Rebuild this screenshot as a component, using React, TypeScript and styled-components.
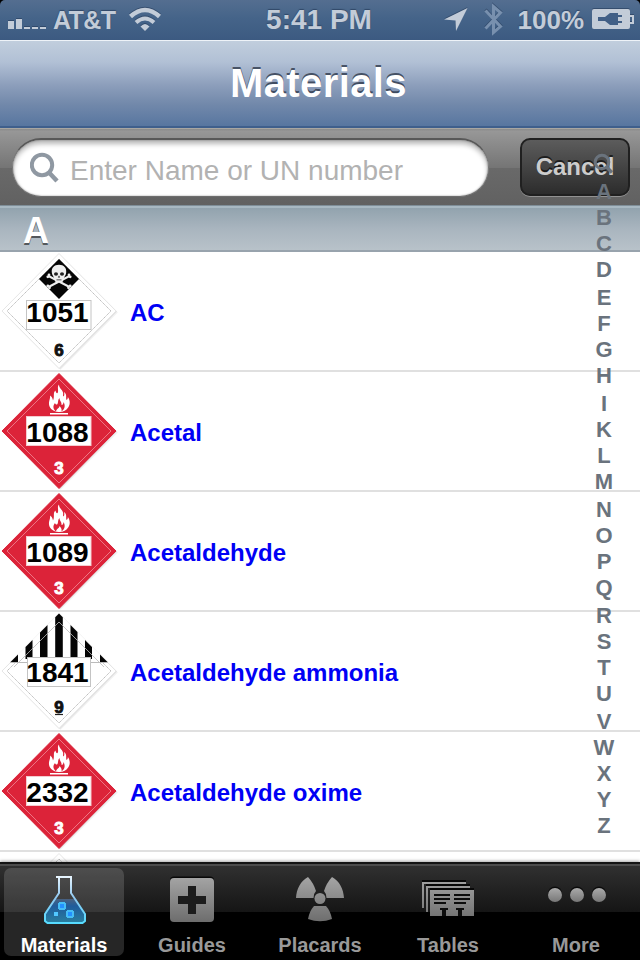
import React from 'react';
import styled, { createGlobalStyle } from 'styled-components';

const GlobalStyle = createGlobalStyle`
  * { box-sizing: border-box; }
  body { margin: 0; background: #000; }
`;

const Screen = styled.div`
  position: relative;
  display: flex;
  flex-direction: column;
  width: 640px;
  height: 960px;
  overflow: hidden;
  background: #fff;
  font-family: "Liberation Sans", Arial, sans-serif;
  font-weight: 700;
  white-space: nowrap;
`;

/* ---------- status bar ---------- */

const StatusShell = styled.div`
  flex: none;
  height: 40px;
  background: #000;
`;

const StatusBar = styled.header`
  display: grid;
  grid-template-columns: 1fr auto 1fr;
  height: 40px;
  border-radius: 5px 5px 0 0;
  background: linear-gradient(#546e90, #456489 45%, #3c5a81);
  color: #c3ccd8;
  text-shadow: 0 -1px 1px rgba(30, 50, 80, 0.6);
`;

const StatusGroup = styled.div<{ $end?: boolean }>`
  display: flex;
  justify-content: ${(p) => (p.$end ? 'flex-end' : 'flex-start')};
  svg { flex: none; filter: drop-shadow(0 -1px 0 rgba(30, 50, 80, 0.5)); }
`;

const StatusText = styled.span<{ $size: number; $spacing?: number }>`
  font-size: ${(p) => p.$size}px;
  letter-spacing: ${(p) => p.$spacing ?? 0}px;
  line-height: 40px;
`;

const Clock = styled(StatusText)`
  padding-right: 2px;
`;

/* ---------- navigation bar ---------- */

const NavBar = styled.div`
  flex: none;
  height: 88px;
  border-top: 1px solid #eef3f8;
  border-bottom: 2px solid #3f5f8c;
  background: linear-gradient(#c1cedd, #b1c0d5 25%, #8c9ebb 52%, #7188aa 75%, #5876a0);
  text-align: center;
`;

const Title = styled.h1`
  margin: 0;
  padding-right: 3px;
  font-size: 40px;
  line-height: 84px;
  letter-spacing: 0.4px;
  color: #fff;
  text-shadow: 0 -2px 0 rgba(40, 50, 68, 0.75);
`;

/* ---------- search ---------- */

const SearchBar = styled.div`
  flex: none;
  display: flex;
  justify-content: space-between;
  height: 78px;
  padding: 9px 10px 0 12px;
  border-top: 1px solid #a8a6a2;
  background: linear-gradient(#8b8b8b, #979797 3%, #757575 50%, #696969 51%, #616161);
`;

const SearchField = styled.label`
  display: flex;
  align-items: center;
  gap: 10px;
  width: 477px;
  height: 59px;
  padding: 0 0 0 17px;
  border-radius: 29px;
  border: 1px solid #777;
  border-top: 2px solid #585858;
  border-bottom-color: #6d6d6d;
  background: #fff;
  box-shadow: inset 0 4px 5px rgba(0, 0, 0, 0.28), inset 0 0 2px rgba(0, 0, 0, 0.4);
`;

const Placeholder = styled.span`
  padding-top: 5px;
  font-size: 28px;
  font-weight: 400;
  color: #b2b2b2;
`;

const CancelButton = styled.button`
  width: 110px;
  height: 58px;
  padding: 0 0 1px;
  border: 2px solid #202020;
  border-radius: 10px;
  background: linear-gradient(#5c5c5c, #2c2c2c);
  box-shadow: 0 1px 0 rgba(255, 255, 255, 0.3);
  font: 700 24px "Liberation Sans", Arial, sans-serif;
  letter-spacing: 0;
  color: #ccc;
  text-shadow: 0 -2px 0 rgba(0, 0, 0, 0.6);
`;

/* ---------- list ---------- */

const SectionHeader = styled.h2`
  flex: none;
  height: 46px;
  margin: 0;
  padding-left: 23px;
  border-top: 2px solid #a8b8c2;
  border-bottom: 2px solid #98a3ad;
  background: linear-gradient(#92a3ae, #a9b5bf 50%, #b8c2c9);
  box-shadow: 0 -1px 0 #7f8e98;
  font-size: 36px;
  line-height: 45px;
  color: #fff;
  text-shadow: 0 2px 0 rgba(0, 0, 0, 0.55);
`;

const List = styled.main`
  flex: 1;
  min-height: 0;
  overflow: hidden;
`;

const Row = styled.div`
  display: flex;
  align-items: center;
  gap: 10px;
  height: 120px;
  border-bottom: 2px solid #e0e0e0;
`;

const PlacardBox = styled.div`
  position: relative;
  width: 120px;
  height: 118px;
  svg { display: block; }
`;

const UnNumber = styled.span`
  position: absolute;
  left: 0;
  top: 45px;
  width: 115px;
  text-align: center;
  font-size: 28px;
  line-height: 32px;
  color: #000;
`;

const MaterialName = styled.span`
  padding-top: 4px;
  font-size: 24px;
  color: #0000f5;
`;

const IndexStrip = styled.nav`
  position: absolute;
  top: 151px;
  left: 588px;
  width: 32px;
  display: flex;
  flex-direction: column;
  align-items: center;
  color: #6a737d;
`;

const IndexGlass = styled.span`
  height: 28px;
  svg { display: block; }
`;

const IndexLetter = styled.span<{ $tall: boolean }>`
  height: ${(p) => (p.$tall ? 28 : 26)}px;
  font-size: 22px;
  line-height: 26px;
`;

/* ---------- tab bar ---------- */

const TabBar = styled.footer`
  position: relative;
  flex: none;
  display: grid;
  grid-template-columns: repeat(5, 128px);
  height: 98px;
  padding-top: 2px;
  border-top: 2px solid #141414;
  box-shadow: 0 -1px 3px rgba(0, 0, 0, 0.35);
  background: linear-gradient(#4c4c4c 0 2px, #303030 2px, #151515 48px, #000 48px);
`;

const Tab = styled.div<{ $active?: boolean }>`
  display: flex;
  flex-direction: column;
  align-items: center;
  width: 120px;
  height: 88px;
  margin: 2px 4px;
  padding-top: 2px;
  border-radius: 7px;
  background: ${(p) => (p.$active ? 'rgba(255,255,255,0.15)' : 'transparent')};
  color: ${(p) => (p.$active ? '#fff' : '#999')};
  font-size: 20px;
  line-height: 22px;
  svg { flex: none; display: block; margin-bottom: 4px; }
`;

/* ---------- drawings ---------- */

const SignalIcon = () => (
  <svg width="53" height="40" fill="#c3ccd8">
    <path d="M8 21h6v8H8zM16 19h6v10h-6zM24 27h6v2h-6zM32 27h6v2h-6zM40 27h6v2h-6z" />
  </svg>
);

const WifiIcon = () => (
  <svg width="48" height="40" viewBox="-5 0 48 40" fill="none" stroke="#c3ccd8">
    <path d="M10.500 16.500Q25 3.500 39.500 16.500" strokeWidth="4.500" />
    <path d="M16 22.500Q25 14.500 34 22.500" strokeWidth="4" />
    <path d="M25 31l-4.500-4.500Q25 21.500 29.500 26.500Z" fill="#c3ccd8" stroke="none" />
  </svg>
);

const LocationIcon = () => (
  <svg width="40" height="40" viewBox="5 0 40 40">
    <path d="M28.500 8L5 19.500L16.500 20.500L17 31Z" fill="#c3ccd8" />
  </svg>
);

const BluetoothIcon = () => (
  <svg width="34" height="40" viewBox="4 0 34 40" fill="none" stroke="#7890ae" strokeWidth="3">
    <path d="M5.500 10.500L20.500 26.500L13.500 32.500V6.500L20.500 12.500L5.500 28.500" />
  </svg>
);

const BatteryIcon = () => (
  <svg width="56" height="40" viewBox="0 0 56 40">
    <rect x="8" y="9" width="38" height="20" rx="2" fill="#c3ccd8" />
    <path d="M46 16h3v7h-3" fill="none" stroke="#c3ccd8" strokeWidth="2" />
    <path
      d="M14 17h7l5-4h8v2h4v2h-4v4h4v2h-4v2h-8l-5-4h-7z"
      fill="#415f86"
    />
  </svg>
);

const GlassIcon = () => (
  <svg width="30" height="32" viewBox="0 0 30 32" fill="none" stroke="#8f98a2">
    <circle cx="12" cy="13" r="10.200" strokeWidth="4" />
    <path d="M19 20.500L27 29" strokeWidth="4.500" />
  </svg>
);

const FlameArt = () => (
  <g fill="#fff" transform="translate(0 2.500)">
    <path d="M59 37.500C52 37 48.500 33 49 28C49.200 25.500 50.500 23.500 50 21C52.500 22.500 52.500 24.500 53 26C55 22 52.500 18.500 55.500 16C56 19 57.500 19.500 58 17.500C58.500 14.500 57 12.500 59 10C59 14 62 14.500 63 18C63.500 20 62.500 21 63.500 22C64.500 21 64.500 19.500 64 17.500C67.500 20 65.500 23 66.500 25.500C67.500 25 68 23.500 67.800 22.500C70.500 26 70 30 68.500 32.500C66.500 36 63.500 37.500 59 37.500Z" />
    <path d="M56 37C52.500 34 53 31 55 28.500C55.500 30 56.500 30.500 57.500 29.500C58.500 27.500 57.500 25.500 59.500 23.500C59.500 26.500 62 27.500 61.500 30.500C63 30.500 63.500 29 63.500 27.500C65.500 31 65 34.500 61.500 37C62 34.500 61 33 59.500 31.500C59.500 34 56.500 34 56 37Z" fill="#dc2339" />
    <path d="M58 37C57.500 35.500 58.500 34.500 59.500 33C60.500 35 60.800 36 60 37Z" />
    <rect x="50" y="38.500" width="18" height="1.500" />
  </g>
);

const SkullArt = () => (
  <g>
    <path d="M59 7L79 27L59 47L39 27Z" fill="#050505" />
    <path d="M48.500 24L69.500 35M69.500 24L48.500 35" stroke="#eee" strokeWidth="2" />
    <g fill="#eee">
      <circle cx="47.800" cy="24.800" r="1.400" /><circle cx="49" cy="23" r="1.400" />
      <circle cx="70.200" cy="24.800" r="1.400" /><circle cx="69" cy="23" r="1.400" />
      <circle cx="47.800" cy="34" r="1.400" /><circle cx="49.500" cy="35.800" r="1.400" />
      <circle cx="70.200" cy="34" r="1.400" /><circle cx="68.500" cy="35.800" r="1.400" />
      <path d="M59 12.800C64 12.800 66.700 16 66.200 20.500C66 23 64.500 24 64 26L62.500 30H55.500L54 26C53.500 24 52 23 51.800 20.500C51.300 16 54 12.800 59 12.800Z" />
    </g>
    <ellipse cx="56" cy="22" rx="2" ry="1.700" fill="#222" />
    <ellipse cx="62" cy="22" rx="2" ry="1.700" fill="#222" />
    <path d="M59 23.500l1.200 2h-2.400zM56.500 27.500h5v.8h-5z" fill="#222" />
  </g>
);

const StripeArt = () => (
  <g>
    <path d="M59 1.500L108 50.500H10Z" fill="#fff" />
    <path
      fill="#050505"
      d="M59 1.500L62.800 5.300V46H55.200V5.300ZM47.500 13V46H40V20.500ZM32.500 28V47H25.500V35ZM18 42.500V50.500H10ZM70.500 13V46H77.500V20ZM85 28V47H92V35ZM100 42.500V50.500H108Z"
    />
    <path d="M10 50.500H28M90 50.500H108" stroke="#bbb" />
    <path d="M59 10L14 55M59 10L104 55" stroke="#bbb" strokeWidth="0.800" fill="none" />
  </g>
);

type Kind = 'poison' | 'flammable' | 'misc';

const hazard: Record<Kind, { digit: string; art: React.ReactNode; digitY: number }> = {
  poison: { digit: '6', art: <SkullArt />, digitY: 104 },
  flammable: { digit: '3', art: <FlameArt />, digitY: 101.5 },
  misc: { digit: '9', art: <StripeArt />, digitY: 100.5 },
};

const PlacardFrame = ({ red }: { red?: boolean }) => (
  <>
    <path d="M60.500 3.500L118 60.500L60.500 118L3 60.500Z" fill="#000" opacity="0.05" />
    <path d="M60 2.500L117 59.500L60 117L3 59.500Z" fill="#000" opacity="0.08" />
    <path
      d="M59 1.500L116 59L59 116.500L2 59Z"
      fill={red ? '#dc2339' : '#fff'}
      stroke={red ? '#dc2339' : '#e6e6e6'}
      strokeWidth="1"
    />
    <path
      d="M59 7L111 59L59 111L7 59Z"
      fill="none"
      stroke={red ? '#ee7f8b' : '#b8b8b8'}
      strokeWidth="0.900"
      strokeDasharray={red ? undefined : '1.500 0.500'}
    />
  </>
);

const PlacardArt = ({ kind }: { kind: Kind }) => {
  const red = kind === 'flammable';
  const { digit, art, digitY } = hazard[kind];
  return (
    <svg width="120" height="118" viewBox="0 0 120 118">
      <PlacardFrame red={red} />
      {art}
      <rect
        x={kind === 'misc' ? 27.5 : 26.5}
        y={kind === 'poison' ? 48.5 : kind === 'misc' ? 45.5 : 44.500}
        width={kind === 'misc' ? 63 : 64.500}
        height="29"
        fill="#fff"
        stroke={red ? '#f4ccd0' : '#c4c4c4'}
      />
      <text
        x="59"
        y={digitY}
        textAnchor="middle"
        fontSize="17"
        fontWeight="700"
        fontFamily="'Liberation Sans', Arial, sans-serif"
        fill={red ? '#fff' : '#111'}
        stroke={red ? '#fff' : '#111'}
        strokeWidth="0.900"
      >
        {digit}
      </text>
      {kind === 'misc' && <path d="M55 102.500H63" stroke="#222" strokeWidth="1.200" />}
    </svg>
  );
};

const GreyFill = ({ id }: { id: string }) => (
  <defs>
    <linearGradient id={id} gradientUnits="userSpaceOnUse" x1="0" y1="6" x2="0" y2="53">
      <stop offset="0" stopColor="#a6a6a6" />
      <stop offset="1" stopColor="#6c6c6c" />
    </linearGradient>
  </defs>
);

const FlaskIcon = () => (
  <svg width="60" height="60" viewBox="0 0 60 60">
    <defs>
      <linearGradient id="glass" gradientUnits="userSpaceOnUse" x1="0" y1="6" x2="0" y2="54">
        <stop offset="0" stopColor="#eaf6ff" />
        <stop offset="0.450" stopColor="#8fc8f0" />
        <stop offset="1" stopColor="#55dcff" />
      </linearGradient>
      <linearGradient id="liquid" x1="0" y1="0" x2="0" y2="1">
        <stop offset="0" stopColor="#4a607e" />
        <stop offset="0.300" stopColor="#1f5c9c" />
        <stop offset="1" stopColor="#2a7f9e" />
      </linearGradient>
    </defs>
    <path d="M20 29H42L50 43V53H12V43Z" fill="url(#liquid)" />
    <path d="M22 7H38M25 8V23L21 29L17 35L11 44V51L13.500 53H48.500L51 51V44L45 35L41 29L37 23V8" fill="none" stroke="url(#glass)" strokeWidth="2" />
    <path d="M25 32h6v1h1v6h-1v1h-6v-1h-1v-6h1zM33 40h6v1h1v6h-1v1h-6v-1h-1v-6h1z" fill="#45bdf5" />
    <path d="M26 34h4v4h-4zM34 42h4v4h-4z" fill="#2490ff" />
    <path d="M20 42h4v4h-4z" fill="#52c8ff" />
  </svg>
);

const GuidesIcon = () => (
  <svg width="60" height="60" viewBox="0 0 60 60">
    <GreyFill id="g1" />
    <rect x="8" y="6.500" width="44" height="20" rx="4" fill="#080808" />
    <rect x="8" y="8" width="44" height="44" rx="4" fill="url(#g1)" />
    <path d="M26 16h8v10h10v8H34v10h-8V34H16v-8h10z" fill="#1c1c1c" />
  </svg>
);

const RadiationIcon = () => (
  <svg width="60" height="60" viewBox="0 0 60 60">
    <GreyFill id="g2" />
    <g fill="url(#g2)">
      <circle cx="30" cy="28.500" r="5.500" />
      <path d="M6 28C6.500 19 10.500 11 18 7Q23.500 13 26 21Q23.500 23.500 23.500 28Z" />
      <path d="M54 28C53.500 19 49.500 11 42 7Q36.500 13 34 21Q36.500 23.500 36.500 28Z" />
      <path d="M24 36H36Q40.500 41 42 49Q30 53.500 18 49Q19.500 41 24 36Z" />
    </g>
  </svg>
);

const TablesIcon = () => (
  <svg width="60" height="60" viewBox="0 0 60 60">
    <GreyFill id="g3" />
    <path d="M4 10h44v2H4zM8 14h44v2H8zM12 18h44v2H12z" fill="#080808" />
    <path d="M4 12h44v2H6v24H4zM8 16h44v2H10v24H8zM12 20h44v26H12z" fill="url(#g3)" />
    <path
      d="M16 24h16v2H16zM16 28h16v2H16zM16 32h12v2H16zM36 24h16v2H36zM36 28h16v2H36zM36 32h12v2H36zM22 38h8v2h-2v6h-4v-6h-2zM38 38h8v2h-2v6h-4v-6h-2z"
      fill="#0c0c0c"
    />
  </svg>
);

const MoreIcon = () => (
  <svg width="60" height="60" viewBox="0 0 60 60">
    <defs>
      <linearGradient id="dot" x1="0" y1="0" x2="0" y2="1">
        <stop offset="0" stopColor="#aaa" />
        <stop offset="1" stopColor="#777" />
      </linearGradient>
    </defs>
    {[9, 31, 53].map((x) => (
      <g key={x}>
        <circle cx={x} cy="23.500" r="7" fill="#0a0a0a" />
        <circle cx={x} cy="25" r="7" fill="url(#dot)" />
      </g>
    ))}
  </svg>
);

/* ---------- data ---------- */

const materials: { un: string; name: string; kind: Kind }[] = [
  { un: '1051', name: 'AC', kind: 'poison' },
  { un: '1088', name: 'Acetal', kind: 'flammable' },
  { un: '1089', name: 'Acetaldehyde', kind: 'flammable' },
  { un: '1841', name: 'Acetaldehyde ammonia', kind: 'misc' },
  { un: '2332', name: 'Acetaldehyde oxime', kind: 'flammable' },
];

const indexLetters = 'ABCDEFGHIKLMNOPQRSTUVWXYZ'.split('');

const tabs = [
  { label: 'Materials', icon: <FlaskIcon /> },
  { label: 'Guides', icon: <GuidesIcon /> },
  { label: 'Placards', icon: <RadiationIcon /> },
  { label: 'Tables', icon: <TablesIcon /> },
  { label: 'More', icon: <MoreIcon /> },
];

export default function App() {
  return (
    <>
      <GlobalStyle />
      <Screen>
        <StatusShell>
          <StatusBar>
            <StatusGroup>
              <SignalIcon />
              <StatusText $size={25} $spacing={-0.6}>AT&amp;T</StatusText>
              <WifiIcon />
            </StatusGroup>
            <Clock $size={28}>5:41 PM</Clock>
            <StatusGroup $end>
              <LocationIcon />
              <BluetoothIcon />
              <StatusText $size={26}>100%</StatusText>
              <BatteryIcon />
            </StatusGroup>
          </StatusBar>
        </StatusShell>
        <NavBar>
          <Title>Materials</Title>
        </NavBar>
        <SearchBar>
          <SearchField>
            <GlassIcon />
            <Placeholder>Enter Name or UN number</Placeholder>
          </SearchField>
          <CancelButton>Cancel</CancelButton>
        </SearchBar>
        <SectionHeader>A</SectionHeader>
        <List>
          {materials.map((m) => (
            <Row key={m.un}>
              <PlacardBox>
                <PlacardArt kind={m.kind} />
                <UnNumber>{m.un}</UnNumber>
              </PlacardBox>
              <MaterialName>{m.name}</MaterialName>
            </Row>
          ))}
          <PlacardBox>
            <svg width="120" height="118" viewBox="0 0 120 118">
              <PlacardFrame />
            </svg>
          </PlacardBox>
        </List>
        <TabBar>
          {tabs.map((t, i) => (
            <Tab key={t.label} $active={i === 0}>
              {t.icon}
              {t.label}
            </Tab>
          ))}
        </TabBar>
        <IndexStrip>
          <IndexGlass>
            <svg width="32" height="28" viewBox="0 0 32 28" fill="none" stroke="#6a737d">
              <circle cx="14" cy="11" r="6.800" strokeWidth="3" />
              <path d="M18.500 16L24 21.500" strokeWidth="3.400" />
            </svg>
          </IndexGlass>
          {indexLetters.map((c, i) => (
            <IndexLetter key={c} $tall={i % 4 === 3 && i < 20}>{c}</IndexLetter>
          ))}
        </IndexStrip>
      </Screen>
    </>
  );
}
